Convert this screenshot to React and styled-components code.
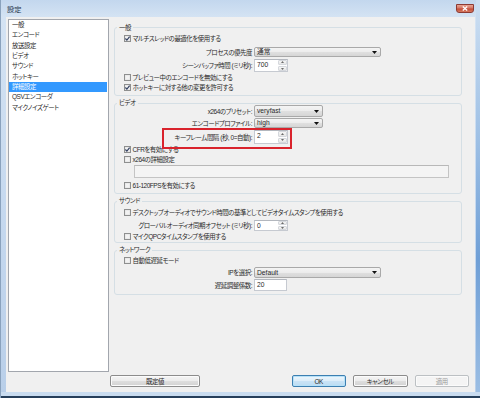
import React from "react";
import styled, { createGlobalStyle } from "styled-components";

const FS = "6.45px";

const Global = createGlobalStyle`
  html, body { margin: 0; padding: 0; background: #ffffff; }
  body {
    font-family: "Liberation Sans", "Noto Sans CJK JP", sans-serif;
    font-feature-settings: "palt" 1;
    letter-spacing: -0.45px;
    color: #2a2a2a;
  }
  *, *::before, *::after { box-sizing: border-box; }
`;

const Window = styled.div`
  width: 480px;
  height: 398px;
  display: flex;
  flex-direction: column;
  padding: 0 5px 6px 5px;
  border-left: 1px solid #8aa2bd;
  background:
    linear-gradient(#263f5b, #263f5b) left bottom / 100% 2px no-repeat,
    linear-gradient(#c9dcf0, #c9dcf0) left bottom 2px / 100% 4px no-repeat,
    linear-gradient(to bottom, #cddff2 0%, #9ec0e5 35%, #6f9fd6 65%, #9dbfe4 100%) right top / 4px 100% no-repeat,
    linear-gradient(to bottom, #c3d7ee 0px, #d4e3f3 17px, #c6d9ef 200px, #b9cfe9 392px);
`;

const TitleBar = styled.div`
  height: 17px;
  display: flex;
  align-items: flex-start;
  flex: 0 0 auto;
`;

const Title = styled.div`
  padding: 5px 0 0 1px;
  font-size: 7.2px;
  line-height: 10px;
  letter-spacing: 0;
  color: #26384e;
`;

const CloseButton = styled.div`
  margin: 4px 1px 0 auto;
  width: 18px;
  height: 9px;
  border: 1px solid #8d3a33;
  border-radius: 0 0 3px 3px;
  background: linear-gradient(to bottom, #e8a493 0%, #d47665 45%, #c34a37 55%, #d67a5f 100%);
  display: flex;
  align-items: center;
  justify-content: center;
`;

const Body = styled.div`
  flex: 1 1 auto;
  background: #f0f0f0;
  display: grid;
  grid-template-columns: 101px 1fr;
  grid-template-rows: 1fr 12px;
  column-gap: 1px;
  row-gap: 3px;
  padding: 2px 6px 5px 2px;
`;

const SideList = styled.ul`
  grid-column: 1;
  grid-row: 1;
  margin: 0;
  padding: 0;
  list-style: none;
  background: #ffffff;
  border: 1px solid #a2a6ad;
`;

const SideItem = styled.li`
  height: 10.33px;
  line-height: 10.33px;
  font-size: ${FS};
  padding-left: 3px;
  margin-right: 1px;
  white-space: nowrap;
  color: ${(p) => (p.$active ? "#ffffff" : "#2a2a2a")};
  background: ${(p) => (p.$active ? "#3399ff" : "transparent")};
`;

const Panel = styled.div`
  grid-column: 2;
  grid-row: 1;
  display: flex;
  flex-direction: column;
  gap: 4px;
  padding: 5.5px 7px 0 4px;
`;

const Group = styled.fieldset`
  margin: 0;
  min-width: 0;
  border: 1px solid #d5dfe5;
  border-radius: 3px;
  padding: 0 6px ${(p) => p.$pb}px 6px;
`;

const Legend = styled.legend`
  margin-left: -4px;
  padding: 0 2px;
  height: 6px;
  font-size: ${FS};
  line-height: 6px;
  white-space: nowrap;
`;

const Rows = styled.div`
  display: flex;
  flex-direction: column;
`;

const CheckRow = styled.div`
  height: ${(p) => p.$h}px;
  display: flex;
  align-items: center;
  gap: 2px;
  padding-left: 2.5px;
  font-size: ${FS};
  white-space: nowrap;
`;

const FieldRow = styled.div`
  position: relative;
  height: ${(p) => p.$h}px;
  display: flex;
  align-items: center;
  gap: 2px;
  padding-left: ${(p) => p.$indent || 0}px;
  font-size: ${FS};
  white-space: nowrap;
`;

const Label = styled.span`
  flex: 0 0 131px;
  text-align: right;
  white-space: nowrap;
`;

const SelectBox = styled.div`
  width: ${(p) => p.$w}px;
  height: ${(p) => p.$h}px;
  display: flex;
  align-items: center;
  justify-content: space-between;
  padding: 0 3px 0 2px;
  border: 1px solid #a9a9a9;
  border-radius: 2px;
  background: linear-gradient(to bottom, #f4f4f4 0%, #ececec 50%, #e0e0e0 51%, #d6d6d6 100%);
  font-size: 6.7px;
  letter-spacing: 0;
  line-height: 8px;
`;

const SpinBox = styled.div`
  width: 34px;
  height: ${(p) => p.$h}px;
  display: flex;
  border: 1px solid #c6cad1;
  border-top-color: #b3b7be;
  background: #ffffff;
`;

const SpinText = styled.span`
  flex: 1 1 auto;
  padding: 1px 0 0 2px;
  font-size: 6.7px;
  letter-spacing: 0;
  line-height: 8px;
`;

const SpinButtons = styled.div`
  flex: 0 0 9px;
  display: flex;
  flex-direction: column;
  gap: 1px;
`;

const SpinButton = styled.div`
  flex: 1 1 0;
  display: flex;
  align-items: center;
  justify-content: center;
  border: 1px solid #d5d8dd;
  border-radius: 1px;
  background: linear-gradient(to bottom, #f6f6f6, #e6e6e6);
`;

const TextBox = styled.div`
  width: ${(p) => p.$w}px;
  height: ${(p) => p.$h}px;
  border: 1px solid ${(p) => (p.$disabled ? "#c4c4c4" : "#c6cad1")};
  border-top-color: ${(p) => (p.$disabled ? "#b8b8b8" : "#b3b7be")};
  background: ${(p) => (p.$disabled ? "#f4f4f4" : "#ffffff")};
  padding: 1px 0 0 2px;
  font-size: 6.7px;
  letter-spacing: 0;
  line-height: 8px;
`;

const Annotation = styled.div`
  position: absolute;
  left: 41px;
  top: -2px;
  width: 130px;
  height: 21px;
  border: 2px solid #d9232c;
  pointer-events: none;
`;

const Footer = styled.div`
  grid-column: 2;
  grid-row: 2;
  display: flex;
  gap: 7px;
`;

const Button = styled.div`
  width: ${(p) => p.$w}px;
  height: 12px;
  display: flex;
  align-items: center;
  justify-content: center;
  font-size: ${FS};
  border-radius: 2px;
  border: 1px solid ${(p) => (p.$primary ? "#3c7fb1" : p.$disabled ? "#bcc0c3" : "#8c8c8c")};
  color: ${(p) => (p.$disabled ? "#9a9a9a" : "#2a2a2a")};
  background: ${(p) =>
    p.$primary
      ? "linear-gradient(to bottom, #edf6fc 0%, #dcedf9 50%, #c9e3f6 51%, #bcdcf2 100%)"
      : p.$disabled
      ? "#f4f4f4"
      : "linear-gradient(to bottom, #f4f4f4 0%, #ececec 50%, #dedede 51%, #d2d2d2 100%)"};
  box-shadow: ${(p) => (p.$primary ? "inset 0 0 0 1px #b6e1f8" : "inset 0 0 0 1px #fbfbfb")};
  margin-left: ${(p) => (p.$push ? "auto" : "0")};
`;

const Check = ({ checked }) => (
  <svg width="7" height="7" viewBox="0 0 7 7" style={{ flex: "0 0 7px" }}>
    <rect x="0.5" y="0.5" width="6" height="6" fill="#e2e2e2" stroke="#8e8f8f" />
    <rect x="1.5" y="1.5" width="4" height="4" fill="#f2f2f2" />
    {checked && (
      <path d="M1.4 3.5 L2.9 5.1 L5.6 1.6" stroke="#2f3d5f" strokeWidth="1.1" fill="none" />
    )}
  </svg>
);

const Arrow = () => (
  <svg width="5" height="3" viewBox="0 0 5 3">
    <path d="M0 0 H5 L2.5 3 Z" fill="#111" />
  </svg>
);

const Select = ({ w, h, children }) => (
  <SelectBox $w={w} $h={h}>
    <span>{children}</span>
    <Arrow />
  </SelectBox>
);

const Spin = ({ h, value }) => (
  <SpinBox $h={h}>
    <SpinText>{value}</SpinText>
    <SpinButtons>
      <SpinButton>
        <svg width="3" height="2" viewBox="0 0 3 2">
          <path d="M0 2 H3 L1.5 0 Z" fill="#6b6b6b" />
        </svg>
      </SpinButton>
      <SpinButton>
        <svg width="3" height="2" viewBox="0 0 3 2">
          <path d="M0 0 H3 L1.5 2 Z" fill="#6b6b6b" />
        </svg>
      </SpinButton>
    </SpinButtons>
  </SpinBox>
);

const sideItems = [
  "一般",
  "エンコード",
  "放送設定",
  "ビデオ",
  "サウンド",
  "ホットキー",
  "詳細設定",
  "QSVエンコーダ",
  "マイクノイズゲート",
];

export default function App() {
  return (
    <>
      <Global />
      <Window>
        <TitleBar>
          <Title>設定</Title>
          <CloseButton>
            <svg width="6" height="5" viewBox="0 0 6 5">
              <path d="M0.8 0.5 L5.2 4.5 M5.2 0.5 L0.8 4.5" stroke="#ffffff" strokeWidth="1.3" />
            </svg>
          </CloseButton>
        </TitleBar>
        <Body>
          <SideList>
            {sideItems.map((t) => (
              <SideItem key={t} $active={t === "詳細設定"}>
                {t}
              </SideItem>
            ))}
          </SideList>

          <Panel>
            <Group $pb={2.5}>
              <Legend>一般</Legend>
              <Rows>
                <CheckRow $h={15}>
                  <Check checked />
                  マルチスレッドの最適化を使用する
                </CheckRow>
                <FieldRow $h={13}>
                  <Label>プロセスの優先度</Label>
                  <Select w={127} h={10.5}>通常</Select>
                </FieldRow>
                <FieldRow $h={14}>
                  <Label>シーンバッファ時間 (ミリ秒):</Label>
                  <Spin h={13.5} value="700" />
                </FieldRow>
                <CheckRow $h={10}>
                  <Check />
                  プレビュー中のエンコードを無効にする
                </CheckRow>
                <CheckRow $h={10}>
                  <Check checked />
                  ホットキーに対する他の変更を許可する
                </CheckRow>
              </Rows>
            </Group>

            <Group $pb={1}>
              <Legend>ビデオ</Legend>
              <Rows>
                <FieldRow $h={10}>
                  <Label>x264のプリセット:</Label>
                  <Select w={69} h={11.5}>veryfast</Select>
                </FieldRow>
                <FieldRow $h={14}>
                  <Label>エンコードプロファイル:</Label>
                  <Select w={69} h={10.5}>high</Select>
                </FieldRow>
                <FieldRow $h={14}>
                  <Label>キーフレーム間隔 (秒, 0=自動):</Label>
                  <Spin h={13.5} value="2" />
                  <Annotation />
                </FieldRow>
                <CheckRow $h={10}>
                  <Check checked />
                  CFRを有効にする
                </CheckRow>
                <CheckRow $h={10}>
                  <Check />
                  x264の詳細設定
                </CheckRow>
                <FieldRow $h={15} $indent={13}>
                  <TextBox $w={315} $h={13} $disabled />
                </FieldRow>
                <CheckRow $h={13}>
                  <Check />
                  61-120FPSを有効にする
                </CheckRow>
              </Rows>
            </Group>

            <Group $pb={1}>
              <Legend>サウンド</Legend>
              <Rows>
                <CheckRow $h={16}>
                  <Check />
                  デスクトップオーディオでサウンド時間の基準としてビデオタイムスタンプを使用する
                </CheckRow>
                <FieldRow $h={11}>
                  <Label>グローバルオーディオ同期オフセット (ミリ秒):</Label>
                  <Spin h={11.5} value="0" />
                </FieldRow>
                <CheckRow $h={10}>
                  <Check />
                  マイクQPCタイムスタンプを使用する
                </CheckRow>
              </Rows>
            </Group>

            <Group $pb={2}>
              <Legend>ネットワーク</Legend>
              <Rows>
                <CheckRow $h={14}>
                  <Check />
                  自動低遅延モード
                </CheckRow>
                <FieldRow $h={11}>
                  <Label>IPを選択:</Label>
                  <Select w={127} h={10.5}>Default</Select>
                </FieldRow>
                <FieldRow $h={14}>
                  <Label>遅延調整係数:</Label>
                  <TextBox $w={33} $h={12.5}>20</TextBox>
                </FieldRow>
              </Rows>
            </Group>
          </Panel>

          <Footer>
            <Button $w={90}>既定値</Button>
            <Button $w={54.5} $primary $push>
              OK
            </Button>
            <Button $w={54.5}>キャンセル</Button>
            <Button $w={54.5} $disabled>
              適用
            </Button>
          </Footer>
        </Body>
      </Window>
    </>
  );
}
